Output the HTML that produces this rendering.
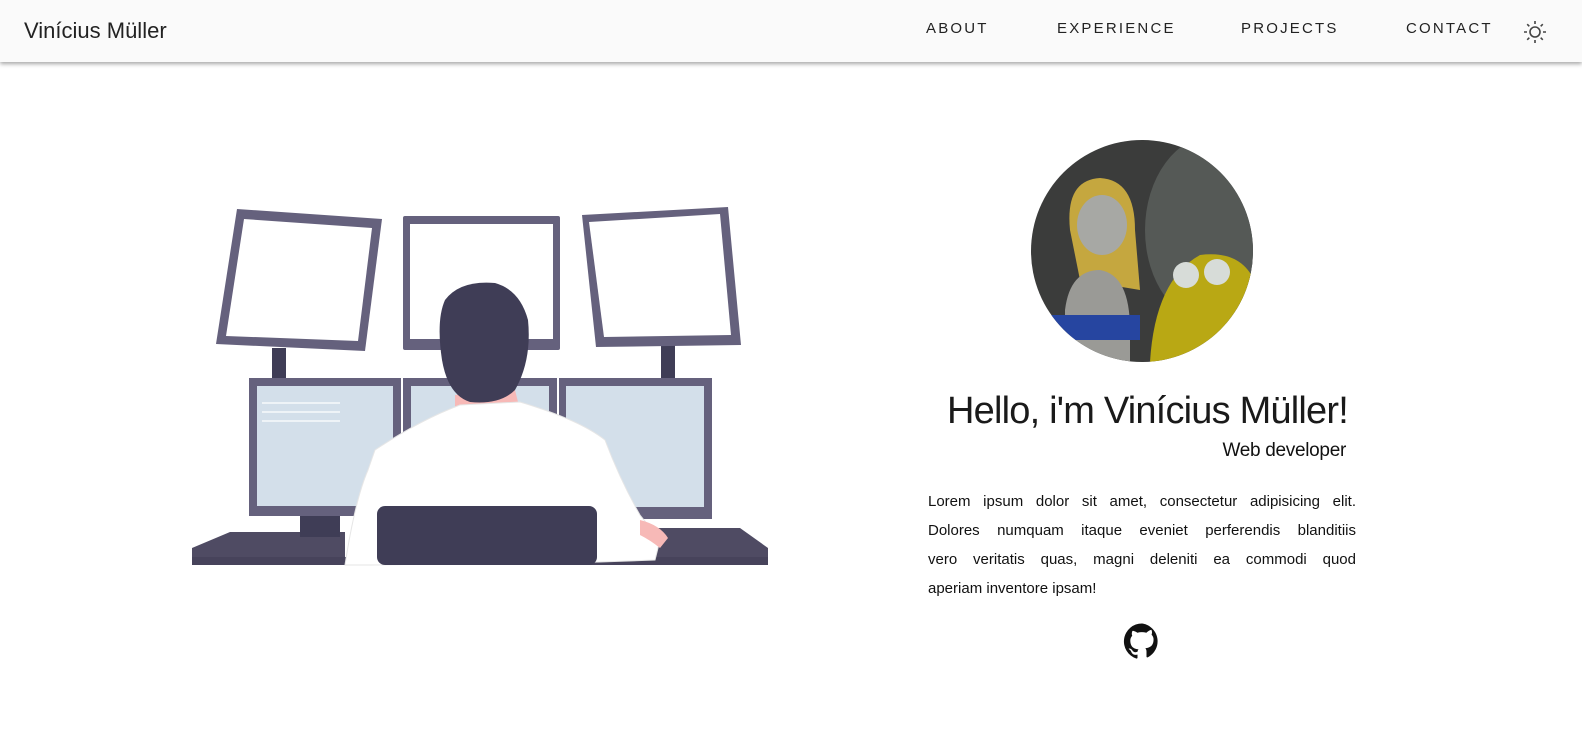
<!DOCTYPE html>
<html><head><meta charset="utf-8"><style>
*{margin:0;padding:0;box-sizing:border-box}
body{width:1582px;height:754px;background:#fff;font-family:"Liberation Sans",sans-serif;position:relative;overflow:hidden;color:#111}
.nav{position:absolute;left:0;top:0;width:1582px;height:62px;background:#fafafa;box-shadow:0 2px 4px rgba(0,0,0,.35)}
.brand{position:absolute;left:24px;top:18px;font-size:22px;color:#222}
.nav a{position:absolute;top:20px;font-size:15px;letter-spacing:2.2px;color:#222;text-decoration:none}
h1{position:absolute;left:800px;top:390px;width:548px;text-align:right;font-weight:normal;font-size:38px;letter-spacing:-0.8px;white-space:nowrap;color:#1a1a1a}
.sub{position:absolute;left:1100px;top:440px;width:246px;text-align:right;font-size:19px;letter-spacing:-0.3px}
.p{position:absolute;left:928px;top:487px;width:428px;font-size:15px;line-height:29px;color:#111}
.p div{text-align:justify;text-align-last:justify;white-space:nowrap}
.p div:last-child{text-align-last:left}
</style></head><body>
<div class="nav"><div class="brand">Vinícius Müller</div>
<a style="left:926px">ABOUT</a><a style="left:1057px">EXPERIENCE</a><a style="left:1241px">PROJECTS</a><a style="left:1406px">CONTACT</a>
<svg style="position:absolute;left:1522px;top:19px" width="26" height="26" viewBox="0 0 26 26" fill="none" stroke="#444" stroke-width="1.6"><circle cx="13" cy="13" r="5"/><path d="M13 2v3M13 21v3M2 13h3M21 13h3M5.2 5.2l2.1 2.1M18.7 18.7l2.1 2.1M5.2 20.8l2.1-2.1M18.7 7.3l2.1-2.1"/></svg>
</div>
<svg style="position:absolute;left:0;top:0" width="1582" height="754">
<polygon points="192,548 230,532 345,532 345,565 192,565" fill="#4f4b63"/>
<polygon points="625,528 740,528 768,548 768,560 625,560" fill="#4f4b63"/>
<rect x="192" y="557" width="576" height="8" fill="#47435b"/>
<rect x="272" y="348" width="14" height="32" fill="#3f3d56"/><rect x="661" y="344" width="14" height="36" fill="#3f3d56"/>
<rect x="300" y="515" width="40" height="22" fill="#3f3d56"/>
<polygon points="237,209 382,219 365,351 216,344" fill="#65617d"/>
<polygon points="244,219 372,228 358,341 226,336" fill="#fff"/>
<rect x="403" y="216" width="157" height="134" rx="2" fill="#65617d"/><rect x="410" y="224" width="143" height="115" fill="#fff"/>
<polygon points="582,215 728,207 741,345 596,347" fill="#65617d"/>
<polygon points="589,222 720,214 731,335 604,337" fill="#fff"/>
<rect x="249" y="378" width="152" height="138" fill="#65617d"/><rect x="257" y="386" width="136" height="120" fill="#d3dfea"/>
<path d="M262 403h78M262 412h78M262 421h78" stroke="#fff" stroke-width="1.2"/>
<rect x="403" y="378" width="154" height="138" fill="#65617d"/><rect x="411" y="386" width="138" height="120" fill="#d3dfea"/>
<rect x="559" y="378" width="153" height="141" fill="#65617d"/><rect x="566" y="386" width="138" height="121" fill="#d3dfea"/>
<path d="M455 395 L455 410 L520 410 L515 390Z" fill="#f7b9b7"/>
<path d="M445 300 Q460 280 495 283 Q520 290 528 320 Q532 360 515 390 Q500 405 470 402 Q448 395 442 360 Q436 320 445 300Z" fill="#3f3d56"/>
<path d="M375 450 Q420 420 460 405 L520 402 Q580 420 605 440 Q620 480 640 515 L660 540 L655 560 L600 562 L370 565 L345 565 Q355 500 368 470Z" fill="#fff" stroke="#e6e6e6"/>
<path d="M640 520 Q660 525 668 538 L660 548 Q650 540 640 535Z" fill="#f7b9b7"/>
<rect x="377" y="506" width="220" height="59" rx="8" fill="#3f3d56"/>
<clipPath id="c"><circle cx="1142" cy="251" r="111"/></clipPath>
<g clip-path="url(#c)"><rect x="1030" y="140" width="224" height="224" fill="#3b3c3b"/>
<ellipse cx="1215" cy="230" rx="70" ry="95" fill="#555956"/>
<path d="M1070 230 Q1065 180 1100 178 Q1135 180 1135 230 L1140 290 L1080 280Z" fill="#c5a73f"/>
<ellipse cx="1102" cy="225" rx="25" ry="30" fill="#a7a8a4"/>
<path d="M1065 310 Q1070 270 1100 270 Q1130 275 1130 330 L1130 362 L1065 362Z" fill="#9a9a96"/>
<rect x="1040" y="315" width="100" height="25" fill="#2645a0"/>
<path d="M1150 362 Q1155 280 1200 255 Q1240 250 1254 280 L1254 362Z" fill="#b9a814"/>
<circle cx="1186" cy="275" r="13" fill="#d7dcd8"/><circle cx="1217" cy="272" r="13" fill="#d7dcd8"/></g>
<path transform="translate(1124,623) scale(1.5)" fill="#111" d="M12 .3a12 12 0 0 0-3.8 23.4c.6.1.8-.3.8-.6v-2c-3.3.7-4-1.6-4-1.6-.6-1.4-1.4-1.8-1.4-1.8-1-.7.1-.7.1-.7 1.2.1 1.8 1.2 1.8 1.2 1 1.8 2.8 1.3 3.5 1 .1-.8.4-1.3.7-1.6-2.7-.3-5.5-1.3-5.5-6 0-1.2.5-2.3 1.3-3.1-.2-.4-.6-1.6.1-3.2 0 0 1-.3 3.3 1.2a11.5 11.5 0 0 1 6 0C17.3 4.3 18.3 4.6 18.3 4.6c.7 1.6.2 2.8.1 3.2.8.8 1.3 1.9 1.3 3.1 0 4.6-2.8 5.6-5.5 5.9.4.4.8 1.1.8 2.2v3.3c0 .3.2.7.8.6A12 12 0 0 0 12 .3"/>
</svg>
<h1>Hello, i'm Vinícius Müller!</h1>
<div class="sub">Web developer</div>
<div class="p"><div>Lorem ipsum dolor sit amet, consectetur adipisicing elit.</div><div>Dolores numquam itaque eveniet perferendis blanditiis</div><div>vero veritatis quas, magni deleniti ea commodi quod</div><div>aperiam inventore ipsam!</div></div>
</body></html>
